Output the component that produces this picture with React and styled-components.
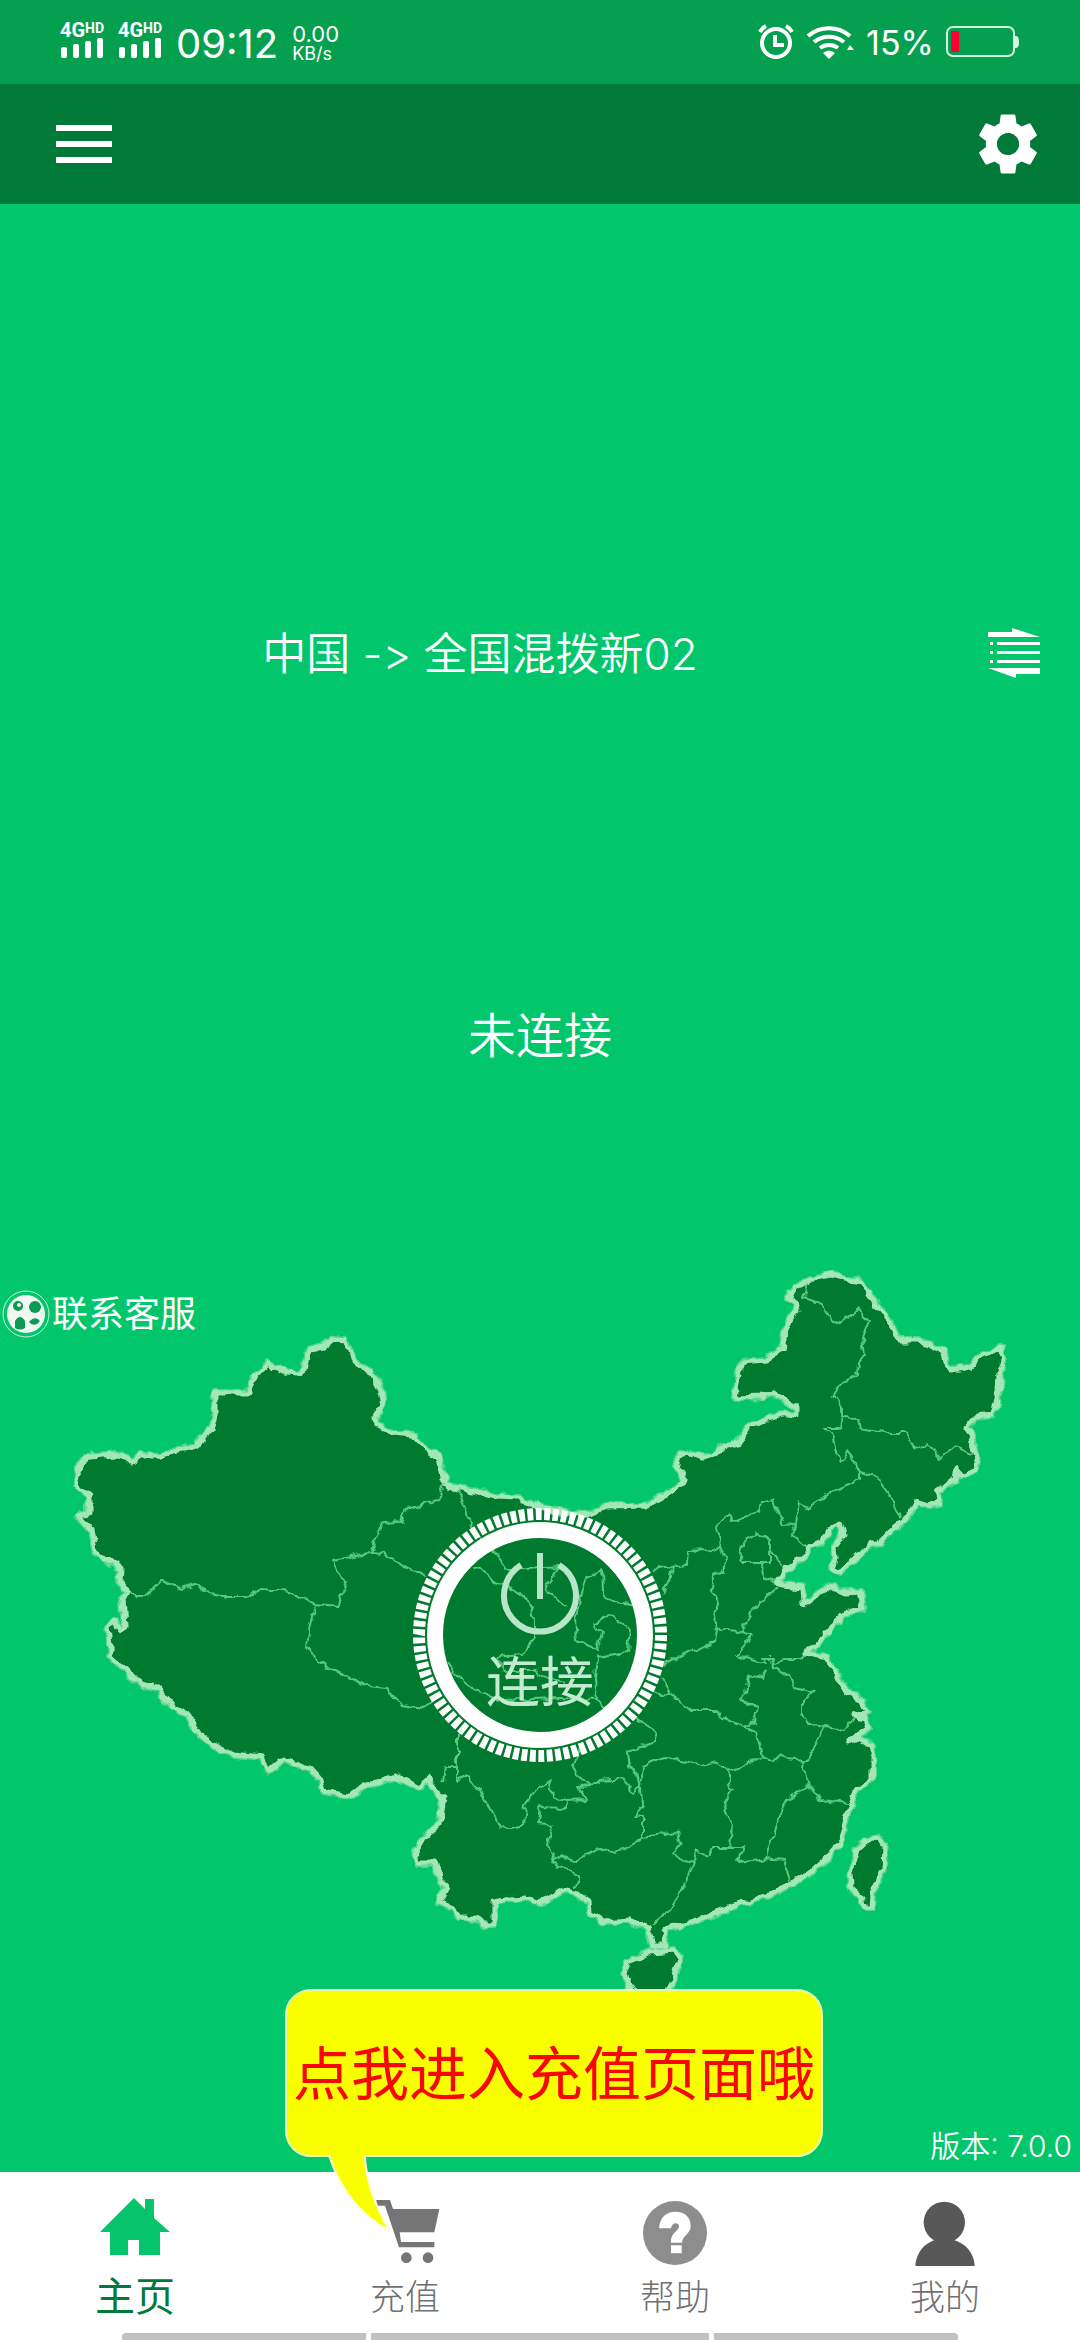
import { useState } from 'react';
import styled, { createGlobalStyle } from 'styled-components';
import { MdSettings } from 'react-icons/md';

const TICKS = '7 3';

// 省界
const borders = [
  '128,1595 147,1595 161,1581 183,1589 197,1584 205,1593 223,1596 247,1596 262,1589 290,1592 315,1604 340,1606 337,1595 347,1588 337,1571 334,1560 370,1553 383,1523 400,1522 405,1510 438,1500 440,1490 447,1485',
  '370,1553 383,1554 400,1564 405,1568 427,1576',
  '475,1567 503,1585 523,1595 535,1617 535,1637 522,1655 495,1657 505,1670 533,1670 547,1678 565,1682',
  '315,1604 310,1625 307,1645 320,1663 367,1686 387,1688 400,1704 423,1708 433,1703',
  '447,1662 463,1683 480,1692 500,1700 560,1698 597,1700 606,1708',
  '458,1488 466,1513 473,1532 497,1553 508,1570 527,1569 560,1567 545,1587 567,1607',
  '640,1605 613,1602 603,1593 602,1570 588,1577 580,1600 575,1620 577,1640 597,1650 602,1633 595,1623 610,1615 630,1630 628,1652 597,1657 595,1677 597,1700',
  '653,1570 670,1567 687,1565 688,1550 712,1549 720,1545 715,1527 728,1512 732,1521 758,1512 760,1503 773,1500 783,1523 795,1524 793,1535 807,1547',
  '795,1524 798,1502 810,1509 830,1493 860,1480 860,1472 850,1453 840,1461 832,1433 825,1427 840,1427 842,1417 858,1418 860,1428 890,1433 905,1433 910,1442 922,1450 927,1443 940,1457 953,1447 973,1454',
  '860,1472 878,1477 890,1495 900,1517',
  '842,1417 842,1407 833,1395 842,1383 857,1375 858,1363 865,1355 863,1337 869,1322 857,1311 850,1318 832,1322 822,1303 803,1298 807,1283',
  '740,1562 745,1540 757,1533 770,1540 770,1562 740,1562',
  '770,1547 783,1567',
  '762,1562 763,1578 777,1582',
  '720,1545 725,1560 723,1572 713,1575 712,1590 719,1603 713,1627 742,1632 752,1610 778,1587',
  '673,1567 670,1580 662,1593',
  '715,1628 713,1643 687,1652 663,1665',
  '742,1632 752,1635 737,1655 767,1663 763,1657 772,1657 773,1667 790,1675 795,1688 813,1693 802,1702 802,1713 810,1725 845,1730 855,1717',
  '773,1663 785,1660 800,1660 805,1653',
  '767,1670 763,1678 748,1675 745,1693 740,1697 745,1703 758,1707 755,1722 745,1726 720,1718 718,1710 690,1710 672,1695 662,1677',
  '672,1695 653,1693',
  '745,1726 758,1733 763,1757 727,1773 717,1762 703,1765 668,1757 643,1767 641,1787 642,1805 633,1817 643,1818 643,1837 678,1832 680,1843 672,1855 693,1862 697,1852 710,1855 713,1847 743,1847 738,1862 767,1858 783,1860 790,1880',
  '727,1773 732,1790 723,1805 732,1827 730,1847',
  '763,1757 773,1762 780,1755 787,1760 803,1762 810,1787 790,1797 778,1820 767,1858',
  '803,1762 813,1753 817,1742 823,1727',
  '810,1787 820,1800 848,1803',
  '693,1862 682,1890 667,1913 652,1925',
  '637,1718 657,1733 653,1742 627,1750 628,1763 638,1775 641,1787 633,1793 623,1778 600,1780 593,1786 580,1780 573,1765 580,1750',
  '593,1786 577,1787 587,1799 567,1800 552,1797 550,1782 537,1788 525,1805 523,1825 500,1829 495,1817 483,1797 468,1775 457,1780 457,1730',
  '567,1800 565,1808 540,1807 538,1823 553,1825 548,1843 555,1852 550,1863 562,1855 577,1861 597,1848 617,1854 643,1838',
  '550,1863 562,1867 580,1875 580,1883 572,1887',
  '457,1767 445,1767 443,1782',
];

const mainland =
  '76,1471 80,1464 90,1456 117,1454 125,1458 132,1463 142,1456 155,1456 197,1447 202,1438 212,1429 215,1418 215,1393 247,1393 252,1380 268,1364 280,1370 293,1374 304,1371 308,1350 323,1346 333,1339 345,1340 350,1354 358,1364 372,1373 379,1388 383,1404 375,1416 376,1425 393,1433 412,1435 425,1448 438,1458 442,1473 447,1486 467,1490 497,1496 517,1497 533,1505 560,1512 587,1515 607,1507 647,1506 663,1497 685,1480 677,1468 680,1455 690,1453 703,1457 712,1457 723,1447 740,1442 748,1428 767,1419 783,1415 797,1415 797,1408 788,1402 775,1393 763,1396 735,1397 738,1378 743,1362 765,1360 782,1349 785,1333 791,1318 797,1312 795,1303 788,1298 795,1287 807,1282 815,1278 832,1275 847,1279 860,1282 868,1292 878,1307 890,1323 898,1340 917,1340 933,1347 943,1352 948,1365 953,1370 970,1367 980,1357 1000,1347 1004,1360 1000,1373 999,1390 993,1415 975,1417 967,1427 972,1440 977,1457 974,1470 962,1475 957,1468 955,1480 937,1492 938,1502 928,1506 915,1502 907,1517 893,1528 878,1543 863,1550 850,1563 840,1572 832,1568 835,1558 834,1548 844,1535 840,1525 830,1528 822,1542 810,1547 802,1558 788,1568 778,1580 783,1586 802,1588 803,1602 810,1603 820,1592 833,1587 847,1593 860,1592 863,1608 847,1612 832,1627 813,1648 805,1653 827,1658 838,1677 847,1693 863,1702 867,1712 853,1715 865,1718 868,1728 848,1742 858,1738 872,1747 872,1778 857,1788 848,1810 840,1842 827,1857 807,1875 790,1883 773,1893 747,1902 728,1908 707,1917 683,1925 668,1928 663,1937 666,1946 653,1946 649,1928 630,1920 603,1922 590,1913 589,1900 573,1893 563,1889 550,1897 537,1902 527,1898 510,1899 493,1902 493,1925 483,1925 478,1917 460,1917 452,1907 440,1902 448,1887 440,1880 435,1863 417,1863 415,1852 423,1838 440,1825 444,1797 435,1790 430,1778 420,1787 407,1780 393,1776 380,1782 363,1786 350,1796 323,1791 320,1779 310,1768 283,1759 268,1772 263,1757 233,1754 213,1745 200,1734 187,1714 173,1707 153,1684 142,1686 123,1668 111,1657 108,1625 115,1621 120,1630 125,1627 123,1600 128,1595 120,1582 121,1568 97,1554 92,1530 77,1516 89,1514 89,1496 78,1487';

const islands = [
  '877,1838 884,1843 883,1870 872,1893 871,1907 865,1907 862,1897 851,1887 850,1870 857,1850 865,1842',
  '650,1953 675,1951 680,1958 673,1980 667,1990 648,1997 632,1992 625,1973 628,1962',
];

function SignalBars() {
  return (
    <Signal>
      <Network>4G<sup>HD</sup></Network>
      <svg width="46" height="20" viewBox="0 0 46 20" fill="#fff">
        <rect x="1" y="9" width="6" height="11" rx="2" />
        <rect x="13" y="6" width="6" height="14" rx="2" />
        <rect x="25" y="3" width="6" height="17" rx="2" />
        <rect x="37" y="0" width="6" height="20" rx="2" />
      </svg>
    </Signal>
  );
}

function AlarmIcon() {
  return (
    <svg width="36" height="36" viewBox="0 0 36 36" fill="none" stroke="#fff">
      <circle cx="18" cy="19" r="14" strokeWidth="4" />
      <path d="M17 11v10h9" strokeWidth="4" />
      <path d="M2 8a14 14 0 0 1 6-6M34 8a14 14 0 0 0-6-6" strokeWidth="4" />
    </svg>
  );
}

function WifiIcon() {
  return (
    <svg width="48" height="36" viewBox="0 0 48 36" fill="none" stroke="#fff" strokeWidth="4">
      <path d="M2 12a32 32 0 0 1 42 0M8 18a24 24 0 0 1 30 0M14 24a15 15 0 0 1 18 0" />
      <path d="M17 29q6-5 12 0l-6 6z" fill="#fff" stroke="none" />
      <path d="M41 26l3-5 4 5z" fill="#fff" stroke="none" />
    </svg>
  );
}

function BatteryIcon() {
  return (
    <svg width="74" height="32" viewBox="0 0 74 32">
      <rect x="1" y="1" width="67" height="29" rx="6" fill="none" stroke="#d4f5df" strokeWidth="2" />
      <rect x="5" y="5" width="8" height="21" fill="#ff0030" />
      <path d="M69 10h1q3 0 3 6t-3 6h-1z" fill="#d4f5df" />
    </svg>
  );
}

function MenuIcon() {
  return (
    <svg width="56" height="38" viewBox="0 0 56 38" fill="#fff">
      <path d="M0 0h56v6H0zM0 16h56v6H0zM0 32h56v6H0z" />
    </svg>
  );
}

function ServerListIcon() {
  return (
    <svg width="52" height="50" viewBox="0 0 52 50" fill="#fff">
      <path d="M0 4h24V0l28 9H0zM52 46H28v4L0 40h52z" />
      <path d="M9 14h43v3H9zM9 23h43v3H9zM9 32h43v3H9zM2 14h3v3H2zM2 23h3v3H2zM2 32h3v3H2z" />
    </svg>
  );
}

function SupportIcon() {
  return (
    <svg width="48" height="48" viewBox="0 0 48 48">
      <circle cx="24" cy="24" r="23" fill="none" stroke="#c9f2d8" />
      <circle cx="24" cy="24" r="19" fill="#f1f7f1" />
      <g fill="#0b9a52">
        <circle cx="16" cy="16" r="5" />
        <circle cx="33" cy="17" r="6" />
        <path d="M13 38v-7q5-8 10 0v7q-5 3-10 0z" />
        <path d="M27 32q6-7 11-1l-3 3q-5 2-8-2z" />
      </g>
      <circle cx="17" cy="15" r="2" fill="#f1f7f1" />
    </svg>
  );
}

function HomeIcon() {
  return (
    <svg width="70" height="70" viewBox="0 0 70 70" fill="#05c46b">
      <path d="M34 0l11 11V1h9v19l16 14H60v23H39V42H28v15H10V34H0z" />
    </svg>
  );
}

function CartIcon() {
  return (
    <svg width="72" height="70" viewBox="1100 174 216 210" fill="#757575">
      <path d="M1122 180h41l9 27h139l-15 70h-104l4 29h100v16h-106l-42-125h-26z" />
      <circle cx="1212" cy="353" r="16" />
      <circle cx="1277" cy="353" r="16" />
    </svg>
  );
}

function HelpIcon() {
  return (
    <svg width="70" height="70" viewBox="120 294 210 210">
      <circle cx="225" cy="399" r="96" fill="#8d8d8d" />
      <path
        d="M177 385C180 350 200 335 226 335c30 0 46 17 46 42 0 26-24 27-26 51h-33c-1-33 25-34 24-50-1-12-21-12-24 7zM213 436h32v24h-32z"
        fill="#fff"
      />
    </svg>
  );
}

function PersonIcon() {
  return (
    <svg width="70" height="70" viewBox="934 294 210 210" fill="#585858">
      <circle cx="1037" cy="367" r="62" />
      <path d="M950 498c2-38 25-68 60-79l-12-12h78l-12 12c38 11 63 41 64 79z" />
    </svg>
  );
}

function ChinaMap() {
  return (
    <MapSvg viewBox="0 1270 1080 730" aria-hidden="true">
      <defs>
        <filter id="coast" x="0" y="1260" width="1080" height="740" filterUnits="userSpaceOnUse">
          <feTurbulence type="fractalNoise" baseFrequency="0.09" numOctaves="2" seed="4" />
          <feDisplacementMap in="SourceGraphic" scale="9" xChannelSelector="R" yChannelSelector="G" />
        </filter>
      </defs>
      <g filter="url(#coast)" strokeLinejoin="round">
        <g fill="#007a2f" stroke="#54d78c" strokeWidth="8">
          <polygon points={mainland} />
          {islands.map((points) => <polygon key={points} points={points} />)}
        </g>
        <g fill="#007a2f" stroke="#a3e6b8" strokeWidth="5">
          <polygon points={mainland} />
          {islands.map((points) => <polygon key={points} points={points} />)}
        </g>
        <g fill="none" stroke="#6ddc93" strokeWidth="2" opacity="0.8">
          {borders.map((points) => <polyline key={points} points={points} />)}
        </g>
      </g>
    </MapSvg>
  );
}

const tabs = [
  { name: '主页', icon: HomeIcon },
  { name: '充值', icon: CartIcon, tip: '点我进入充值页面哦' },
  { name: '帮助', icon: HelpIcon },
  { name: '我的', icon: PersonIcon },
];

function App() {
  const [tab, setTab] = useState('主页');
  return (
    <Page>
      <GlobalStyle />
      <StatusBar>
        <StatusGroup>
          <SignalBars />
          <SignalBars />
          <Time>09:12</Time>
          <Speed>
            <span>0.00</span>
            <small>KB/s</small>
          </Speed>
        </StatusGroup>
        <StatusGroup>
          <AlarmIcon />
          <WifiIcon />
          <Percent>15%</Percent>
          <BatteryIcon />
        </StatusGroup>
      </StatusBar>
      <Header>
        <IconButton aria-label="菜单"><MenuIcon /></IconButton>
        <IconButton aria-label="设置"><MdSettings size={74} /></IconButton>
      </Header>
      <Main>
        <ServerRow>
          <ServerName>中国 -&gt; 全国混拨新02</ServerName>
          <IconButton aria-label="线路列表"><ServerListIcon /></IconButton>
        </ServerRow>
        <StateText>未连接</StateText>
        <MapArea>
          <ChinaMap />
          <SupportLink href="#support">
            <SupportIcon />
            联系客服
          </SupportLink>
          <ConnectButton>
            <Dial viewBox="0 0 256 256">
              <circle cx="128" cy="128" r="121" stroke="#fff" strokeWidth="12" pathLength="900" strokeDasharray={TICKS} />
              <circle cx="128" cy="128" r="105" stroke="#fff" strokeWidth="16" />
              <path d="M109 58a36 36 0 1 0 38 0" stroke="#b9e6c8" strokeWidth="6" />
              <path d="M128 46v46" stroke="#b9e6c8" strokeWidth="6" />
            </Dial>
            <ConnectText>连接</ConnectText>
          </ConnectButton>
        </MapArea>
        <Version>版本: 7.0.0</Version>
      </Main>
      <TabBar>
        {tabs.map(({ name, icon: Icon, tip }) => (
          <TabSlot key={name}>
            <Tab $active={tab === name} onClick={() => setTab(name)}>
              <Icon />
              <span>{name}</span>
            </Tab>
            {tip && (
              <Bubble>
                {tip}
                <Tail viewBox="0 0 62 76">
                  <path d="M2 2Q18 52 60 74Q38 38 36 2" fill="#faff00" stroke="#fffde0" strokeWidth="2" />
                  <path d="M3 0h32v5H4z" fill="#faff00" />
                </Tail>
              </Bubble>
            )}
          </TabSlot>
        ))}
      </TabBar>
      <GestureBar>
        <Segment $grow={13} />
        <Segment $grow={18} />
        <Segment $grow={13} />
      </GestureBar>
    </Page>
  );
}
export default App;

const GlobalStyle = createGlobalStyle`
  * {
    box-sizing: border-box;
  }
  body {
    margin: 0;
    font-family: Inter, 'Noto Sans CJK SC', sans-serif;
    font-weight: 350;
  }
  svg {
    display: block;
    flex-shrink: 0;
  }
`;
const Page = styled.div`
  display: flex;
  flex-direction: column;
  min-height: 100vh;
  background: #01c66c;
`;
const StatusBar = styled.div`
  display: flex;
  justify-content: space-between;
  align-items: center;
  height: 84px;
  padding: 0 60px;
  background: #05a04f;
  color: #fff;
  font-weight: 400;
`;
const StatusGroup = styled.div`
  display: flex;
  align-items: center;
  gap: 12px;
`;
const Signal = styled.div`
  display: flex;
  flex-direction: column;
  width: 46px;
  padding-bottom: 4px;
`;
const Network = styled.span`
  display: flex;
  height: 16px;
  font-family: Roboto, sans-serif;
  font-size: 20px;
  line-height: 16px;
  font-weight: 700;
  sup {
    font-size: 14px;
    line-height: 12px;
  }
`;
const Time = styled.span`
  font-size: 40px;
  line-height: 44px;
  padding-top: 4px;
`;
const Speed = styled.span`
  display: flex;
  flex-direction: column;
  padding: 2px 0 0 2px;
  font-size: 22px;
  line-height: 22px;
  small {
    font-size: 18px;
    line-height: 18px;
  }
`;
const Percent = styled.span`
  padding-top: 2px;
  font-size: 34px;
  line-height: 40px;
`;
const Header = styled.header`
  display: flex;
  justify-content: space-between;
  align-items: center;
  height: 120px;
  padding: 0 35px 0 56px;
  background: #007939;
`;
const IconButton = styled.button`
  padding: 0;
  border: none;
  background: none;
  color: #fff;
  cursor: pointer;
`;
const Main = styled.main`
  display: flex;
  flex-direction: column;
  flex: 1;
  color: #fff;
`;
const ServerRow = styled.div`
  display: grid;
  grid-template-columns: 1fr 120px;
  align-items: center;
  padding-top: 398px;
  line-height: 100px;
  ${IconButton} {
    justify-self: center;
    padding-right: 12px;
  }
`;
const ServerName = styled.div`
  padding-top: 2px;
  text-align: center;
  font-size: 44px;
  font-feature-settings: 'calt' 0;
`;
const StateText = styled.div`
  padding: 282px 0 184px;
  text-align: center;
  font-size: 48px;
  line-height: 100px;
`;
const MapArea = styled.section`
  display: grid;
  > * {
    grid-area: 1 / 1;
  }
`;
const MapSvg = styled.svg`
  width: 100%;
`;
const SupportLink = styled.a`
  place-self: start;
  display: flex;
  align-items: center;
  gap: 2px;
  padding: 20px 0 0 2px;
  color: #fff;
  font-size: 36px;
  line-height: 48px;
  font-weight: 400;
  text-decoration: none;
`;
const ConnectButton = styled.button`
  place-self: center;
  display: grid;
  padding: 0;
  border: none;
  border-radius: 50%;
  background: none;
  color: #c4ead0;
  font-family: inherit;
  cursor: pointer;
  > * {
    grid-area: 1 / 1;
  }
`;
const Dial = styled.svg`
  width: 256px;
  height: 256px;
  fill: none;
`;
const ConnectText = styled.span`
  align-self: end;
  padding-bottom: 50px;
  font-size: 54px;
  line-height: 60px;
  font-weight: 400;
`;
const Version = styled.div`
  margin-top: auto;
  padding: 0 8px 4px 0;
  text-align: right;
  font-size: 30px;
  line-height: 44px;
`;
const TabBar = styled.nav`
  display: grid;
  grid-template-columns: repeat(4, 1fr);
  background: #fff;
`;
const TabSlot = styled.div`
  position: relative;
`;
const Tab = styled.button`
  display: flex;
  flex-direction: column;
  align-items: center;
  justify-content: space-between;
  width: 100%;
  height: 161px;
  padding: 26px 0 16px;
  border: none;
  background: none;
  color: ${({ $active }) => ($active ? '#00793a' : '#707070')};
  font-family: inherit;
  font-size: ${({ $active }) => ($active ? '40px' : '35px')};
  font-weight: ${({ $active }) => ($active ? 400 : 300)};
  line-height: 40px;
  cursor: pointer;
`;
const Bubble = styled.div`
  position: absolute;
  bottom: calc(100% + 15px);
  left: 15px;
  z-index: 1;
  padding: 2px 6px 0;
  border: 2px solid #e6ffb0;
  border-radius: 26px;
  background: #faff00;
  color: #fa0505;
  font-size: 58px;
  line-height: 162px;
  font-weight: 400;
  white-space: nowrap;
`;
const Tail = styled.svg`
  position: absolute;
  top: calc(100% - 2px);
  left: 40px;
  width: 65px;
  height: 80px;
`;
const GestureBar = styled.div`
  display: flex;
  gap: 5px;
  padding: 0 122px;
  background: #fff;
`;
const Segment = styled.span`
  flex: ${({ $grow }) => $grow};
  height: 7px;
  background: #c2c2c2;
  &:first-child {
    border-top-left-radius: 4px;
  }
  &:last-child {
    border-top-right-radius: 4px;
  }
`;
